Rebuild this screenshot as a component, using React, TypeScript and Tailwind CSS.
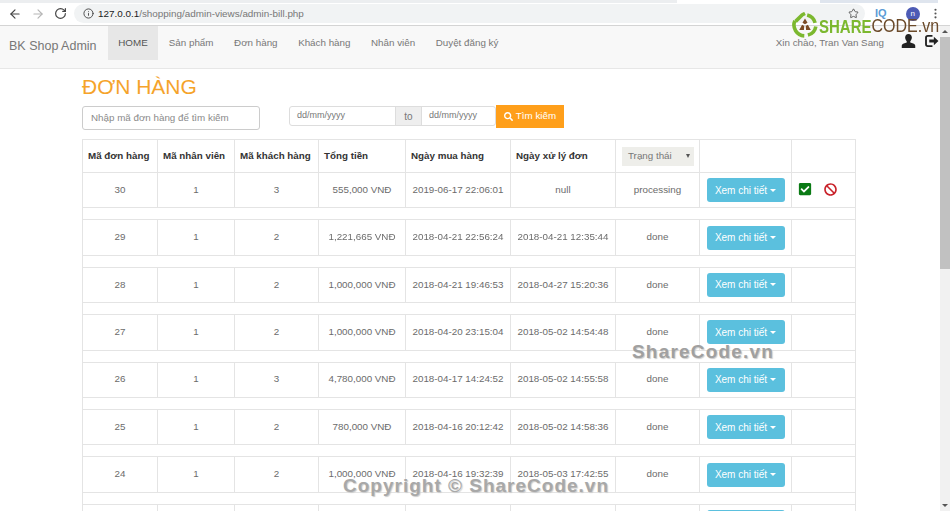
import { ArrowLeft, ArrowRight, RotateCw, Info, Star, MoreVertical } from "lucide-react";
import { FaSearch, FaCheckSquare, FaBan } from "react-icons/fa";

const FONT = "font-['Liberation_Sans',Arial,sans-serif]";

const BILLS = [
  { id: 30, staff: 1, customer: 3, total: "555,000 VNĐ", bought: "2019-06-17 22:06:01", handled: "null", status: "processing", pending: true },
  { id: 29, staff: 1, customer: 2, total: "1,221,665 VNĐ", bought: "2018-04-21 22:56:24", handled: "2018-04-21 12:35:44", status: "done", glitch: true },
  { id: 28, staff: 1, customer: 2, total: "1,000,000 VNĐ", bought: "2018-04-21 19:46:53", handled: "2018-04-27 15:20:36", status: "done" },
  { id: 27, staff: 1, customer: 2, total: "1,000,000 VNĐ", bought: "2018-04-20 23:15:04", handled: "2018-05-02 14:54:48", status: "done" },
  { id: 26, staff: 1, customer: 3, total: "4,780,000 VNĐ", bought: "2018-04-17 14:24:52", handled: "2018-05-02 14:55:58", status: "done" },
  { id: 25, staff: 1, customer: 2, total: "780,000 VNĐ", bought: "2018-04-16 20:12:42", handled: "2018-05-02 14:58:36", status: "done" },
  { id: 24, staff: 1, customer: 2, total: "1,000,000 VNĐ", bought: "2018-04-16 19:32:39", handled: "2018-05-03 17:42:55", status: "done" },
];

const NAV = ["Sản phẩm", "Đơn hàng", "Khách hàng", "Nhân viên", "Duyệt đăng ký"];

const COLS = [75, 77, 84, 87, 105, 105, 84, 92, 64];

function Logo() {
  return (
    <svg width="26" height="26" viewBox="0 0 36 36" className="shrink-0">
      <path d="M21 4a15 15 0 0 1 11 11" fill="none" stroke="#7cb82f" strokeWidth="5" />
      <path d="M33 20a15 15 0 0 1-11 12" fill="none" stroke="#7cb82f" strokeWidth="5" />
      <path d="M17 33A15 15 0 0 1 4 12" fill="none" stroke="#7cb82f" strokeWidth="5" />
      <path d="M5 13 14 4l4-2" fill="none" stroke="#7cb82f" strokeWidth="5" />
      <path d="M18 9l3.500 6-3.500 2-3.500-2zM10 25l4-7.500 3 2-.5 5.500zM26 25l-4-7.500-3 2 .5 5.500z" fill="#7a4a24" />
    </svg>
  );
}

function BrowserBar() {
  return (
    <div className="shrink-0 flex flex-col bg-white border-b border-[#d4d4d4] text-[#5f6368]">
      <div className="h-[3px] flex">
        <div className="w-[677px] bg-[#eceef0]" />
        <div className="w-[143px] bg-white" />
        <div className="w-[118px] bg-[#dfe5ee]" />
      </div>
      <div className="h-[22px] pb-[1px] flex items-center">
        <div className="w-[74px] flex items-center pl-[8px] gap-[9px] shrink-0">
          <ArrowLeft size={14} strokeWidth={2} className="text-[#444]" />
          <ArrowRight size={14} strokeWidth={2} className="text-[#b5b5b5]" />
          <RotateCw size={13} strokeWidth={2.2} className="text-[#444]" />
        </div>
        <div className="w-[791px] h-[19px] rounded-full bg-[#f1f3f4] flex items-center pl-[9px] justify-between pr-[6px] shrink-0">
          <div className="flex items-center gap-[4px] text-[9.9px] leading-none">
            <Info size={11} className="text-[#444]" />
            <span className="text-[#222]">127.0.0.1<span className="text-[#777]">/shopping/admin-views/admin-bill.php</span></span>
          </div>
          <Star size={11} className="text-[#555]" />
        </div>
        <span className="ml-[10px] text-[11px] leading-none font-bold text-[#5b9bd5]">IQ</span>
        <div className="ml-[19px] w-[14px] h-[14px] rounded-full bg-[#4d5bb5] text-white text-[8px] flex items-center justify-center">n</div>
        <MoreVertical size={13} className="ml-[9px] text-[#555]" />
      </div>
    </div>
  );
}

function Navbar() {
  return (
    <nav className="h-[43px] shrink-0 flex items-stretch bg-[#f8f8f8] border-b border-[#e7e7e7] text-[9.8px] text-[#777]">
      <div className="pl-[9px] w-[108px] text-[12.5px] flex items-center pb-[2px]">BK Shop Admin</div>
      <div className="w-[50px] h-[34px] bg-[#e7e7e7] text-[#555] flex items-center justify-center">HOME</div>
      <div className="flex items-start pl-[0.5px]">
        {NAV.map((item) => (
          <span key={item} className="px-[10.3px] h-[34px] flex items-center">{item}</span>
        ))}
      </div>
      <div className="ml-auto flex items-start pr-[1px]">
        <span className="h-[34px] flex items-center">Xin chào, Tran Van Sang</span>
        <svg width="15" height="14" viewBox="0 0 16 16" preserveAspectRatio="none" className="ml-[17px] mt-[8px]" fill="#222">
          <path d="M8 0c2.300 0 3.600 1.800 3.600 4 0 1.700-.8 3.300-1.700 4.300v1.400c1.800.6 5 1.400 5.300 3.300v3H.8v-3c.3-1.900 3.500-2.700 5.300-3.300V8.300C5.200 7.300 4.400 5.700 4.400 4 4.400 1.800 5.700 0 8 0z" />
        </svg>
        <svg width="14" height="12" viewBox="0 0 15 13" className="ml-[9px] mt-[9px]" fill="none" stroke="#222">
          <path d="M8 1H3a2 2 0 0 0-2 2v7a2 2 0 0 0 2 2h5" strokeWidth="2" />
          <path d="M4.500 5h5V2l5 4.500-5 4.500V8h-5z" fill="#222" strokeWidth="0" />
        </svg>
      </div>
    </nav>
  );
}

function SearchBar() {
  return (
    <div className="flex items-start text-[10px] text-[#777]">
      <input
        readOnly
        placeholder="Nhập mã đơn hàng để tìm kiếm"
        className="w-[178px] h-[24px] px-[8px] pb-[1px] text-[9.8px] border border-[#ccc] rounded-[3px] bg-white placeholder:text-[#8a8a8a] outline-none"
      />
      <div className="ml-[29px] flex items-center h-[20px] border border-[#ddd] rounded-[3px]">
        <span className="w-[105px] pl-[7px] text-[9px]">dd/mm/yyyy</span>
        <span className="w-[27px] h-full bg-[#eee] border-x border-[#ddd] flex items-center justify-center text-[10px]">to</span>
        <span className="w-[73px] pl-[7px] text-[9px]">dd/mm/yyyy</span>
      </div>
      <button className="w-[68px] h-[23px] -mt-[1px] bg-[#ff9f1a] text-white text-[9.8px] flex items-center justify-center gap-[3px]">
        <FaSearch size={9} />
        Tìm kiếm
      </button>
    </div>
  );
}

function DetailButton() {
  return (
    <button className="w-[78px] h-[24px] rounded-[3px] bg-[#5bc0de] text-white text-[10px] inline-flex items-center justify-center gap-[3px]">
      Xem chi tiết
      <span className="border-x-[3px] border-x-transparent border-t-[3px] border-t-white" />
    </button>
  );
}

function BillTable() {
  const th = "border border-[#e4e4e4] px-[5px] text-left font-bold text-[#333] text-[9.8px] align-middle whitespace-nowrap";
  const td = "border border-[#e4e4e4] text-center text-[9.8px] text-[#6b6b6b] align-middle whitespace-nowrap";
  return (
    <table className="w-[773px] table-fixed border-collapse">
      <colgroup>
        {COLS.map((w, i) => (
          <col key={i} style={{ width: w }} />
        ))}
      </colgroup>
      <thead>
        <tr className="h-[33px]">
          <th className={th}>Mã đơn hàng</th>
          <th className={th}>Mã nhân viên</th>
          <th className={th}>Mã khách hàng</th>
          <th className={th}>Tổng tiền</th>
          <th className={th}>Ngày mua hàng</th>
          <th className={th}>Ngày xử lý đơn</th>
          <th className={th}>
            <div className="ml-[1px] w-[72px] h-[19px] bg-[#eeeeea] flex items-center justify-between pl-[6px] pr-[4px] font-normal text-[9.8px] text-[#777]">
              Trạng thái
              <span className="border-x-[2.5px] border-x-transparent border-t-[4px] border-t-[#555]" />
            </div>
          </th>
          <th className={th} />
          <th className={th} />
        </tr>
      </thead>
      <tbody>
        {BILLS.flatMap((b) => [
          <tr key={b.id} className="h-[35.400px]">
            <td className={td}>{b.id}</td>
            <td className={td}>{b.staff}</td>
            <td className={td}>{b.customer}</td>
            <td className={td}><span className={b.glitch ? "blur-[0.6px]" : ""}>{b.total}</span></td>
            <td className={td}><span className={b.glitch ? "blur-[0.6px]" : ""}>{b.bought}</span></td>
            <td className={td}><span className={b.glitch ? "blur-[0.6px]" : ""}>{b.handled}</span></td>
            <td className={td}>{b.status}</td>
            <td className={td}><DetailButton /></td>
            <td className={td}>
              {b.pending && (
                <div className="flex items-center pl-[6px] gap-[12px] pb-[2px]">
                  <FaCheckSquare size={14} className="text-[#0a7a14]" />
                  <FaBan size={13} className="text-[#c9222a]" />
                </div>
              )}
            </td>
          </tr>,
          <tr key={`gap-${b.id}`} className="h-[12px]">
            <td colSpan={9} className="border border-[#e4e4e4]" />
          </tr>,
        ])}
        {/* next row runs off the bottom of the window */}
        <tr className="h-[35.400px]">
          <td className={td} />
          <td className={td} />
          <td className={td} />
          <td className={td} />
          <td className={td} />
          <td className={td} />
          <td className={td} />
          <td className={td}><DetailButton /></td>
          <td className={td} />
        </tr>
      </tbody>
    </table>
  );
}

function Scrollbar() {
  return (
    <div className="w-[10px] shrink-0 bg-[#f1f1f1] flex flex-col items-center">
      <span className="mt-[4px] border-x-[3px] border-x-transparent border-b-[3px] border-b-[#555]" />
      <div className="mt-[4px] w-full h-[232px] bg-[#c1c1c1]" />
      <span className="mt-auto mb-[4px] border-x-[3px] border-x-transparent border-t-[3px] border-t-[#555]" />
    </div>
  );
}

export default function App() {
  return (
    <div className={`relative h-[511px] w-[950px] overflow-hidden bg-white flex flex-col ${FONT}`}>
      <BrowserBar />
      <div className="flex-1 min-h-0 flex">
        <main className="flex-1 min-w-0 overflow-hidden">
          <Navbar />
          <div className="pl-[82px]">
            <h1 className="mt-[5px] h-[26px] text-[21px] leading-[26px] text-[#f5a32a]">ĐƠN HÀNG</h1>
            <div className="mt-[6px]">
              <SearchBar />
            </div>
            <div className="mt-[9px]">
              <BillTable />
            </div>
          </div>
        </main>
        <Scrollbar />
      </div>

      {/* Watermarks */}
      <div className="absolute left-[792px] top-[12px] flex items-center">
        <Logo />
        <span className="ml-[1px] mt-[2px] inline-block scale-y-[1.2] text-[15px] leading-none font-bold text-[#7cb82f]">SHARE</span>
        <span className="mt-[2px] inline-block scale-y-[1.2] text-[16px] leading-none text-[#6b4a2a]">CODE.vn</span>
      </div>
      <span className="absolute left-[632px] top-[342px] text-[19px] leading-[20px] tracking-[1.2px] font-bold text-[#a0a0a0] [text-shadow:1px_1px_1px_#ccc]">ShareCode.vn</span>
      <span className="absolute left-[343px] top-[475px] text-[19px] leading-[22px] tracking-[1px] font-bold text-[#a8a8a8] [text-shadow:1px_1px_1px_#ccc]">Copyright © ShareCode.vn</span>
    </div>
  );
}
